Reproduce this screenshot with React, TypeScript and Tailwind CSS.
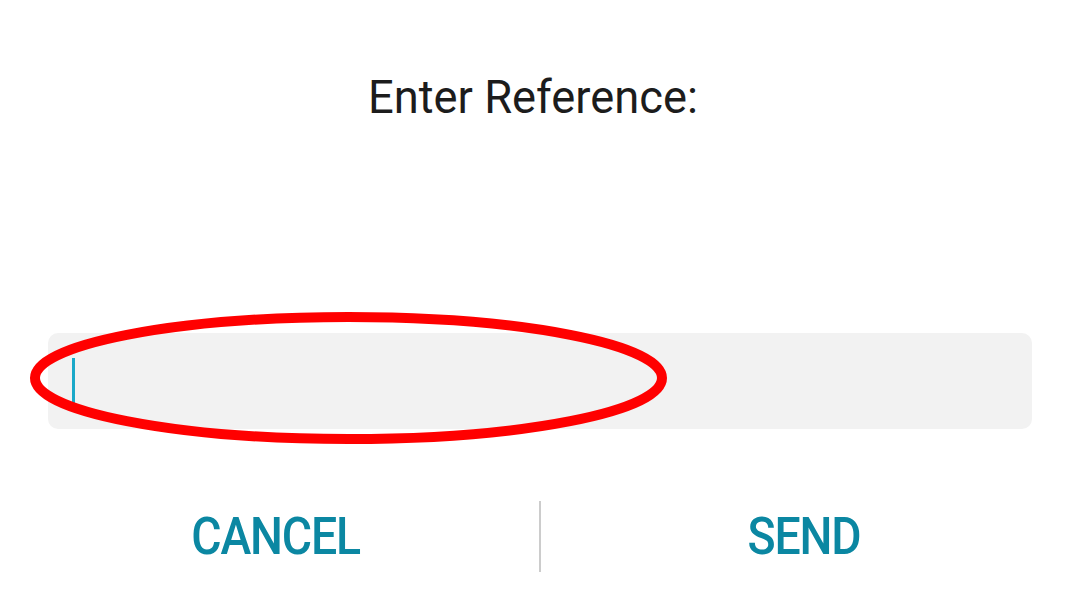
export default function App() {
  return (
    <div className="min-h-screen w-full bg-white flex flex-col" style={{ fontFamily: 'Roboto, "Noto Sans", sans-serif' }}>
      {/* Title */}
      <div className="pt-[70px] pr-[14px] text-center text-[45.3px] leading-[56px] text-[#1c1c1c]">
        Enter Reference:
      </div>

      {/* Input field with annotation */}
      <div className="relative mt-[207px] mx-[48px]">
        <div className="h-[96px] rounded-[10px] bg-[#f2f2f2] flex items-center pl-[24px]">
          <div className="w-[3px] h-[47px] bg-[#1ba9c9]" />
        </div>
        <svg
          className="absolute left-[-20px] top-[-23px] pointer-events-none"
          width="640"
          height="136"
          viewBox="0 0 640 136"
        >
          <ellipse cx="320.5" cy="68" rx="313.5" ry="61" fill="none" stroke="#ff0000" strokeWidth="10" />
        </svg>
      </div>

      {/* Actions */}
      <div className="mt-[72px] flex items-center">
        <button className="flex-1 flex justify-center pl-[12px]">
          <span className="inline-block scale-x-[0.91] text-[51px] leading-[60px] font-medium text-[#0b87a2] tracking-tight">CANCEL</span>
        </button>
        <div className="w-[2px] h-[71px] bg-[#cccccc]" />
        <button className="flex-1 flex justify-center pr-[12px]">
          <span className="inline-block scale-x-[0.91] text-[51px] leading-[60px] font-medium text-[#0b87a2] tracking-tight">SEND</span>
        </button>
      </div>
    </div>
  );
}
